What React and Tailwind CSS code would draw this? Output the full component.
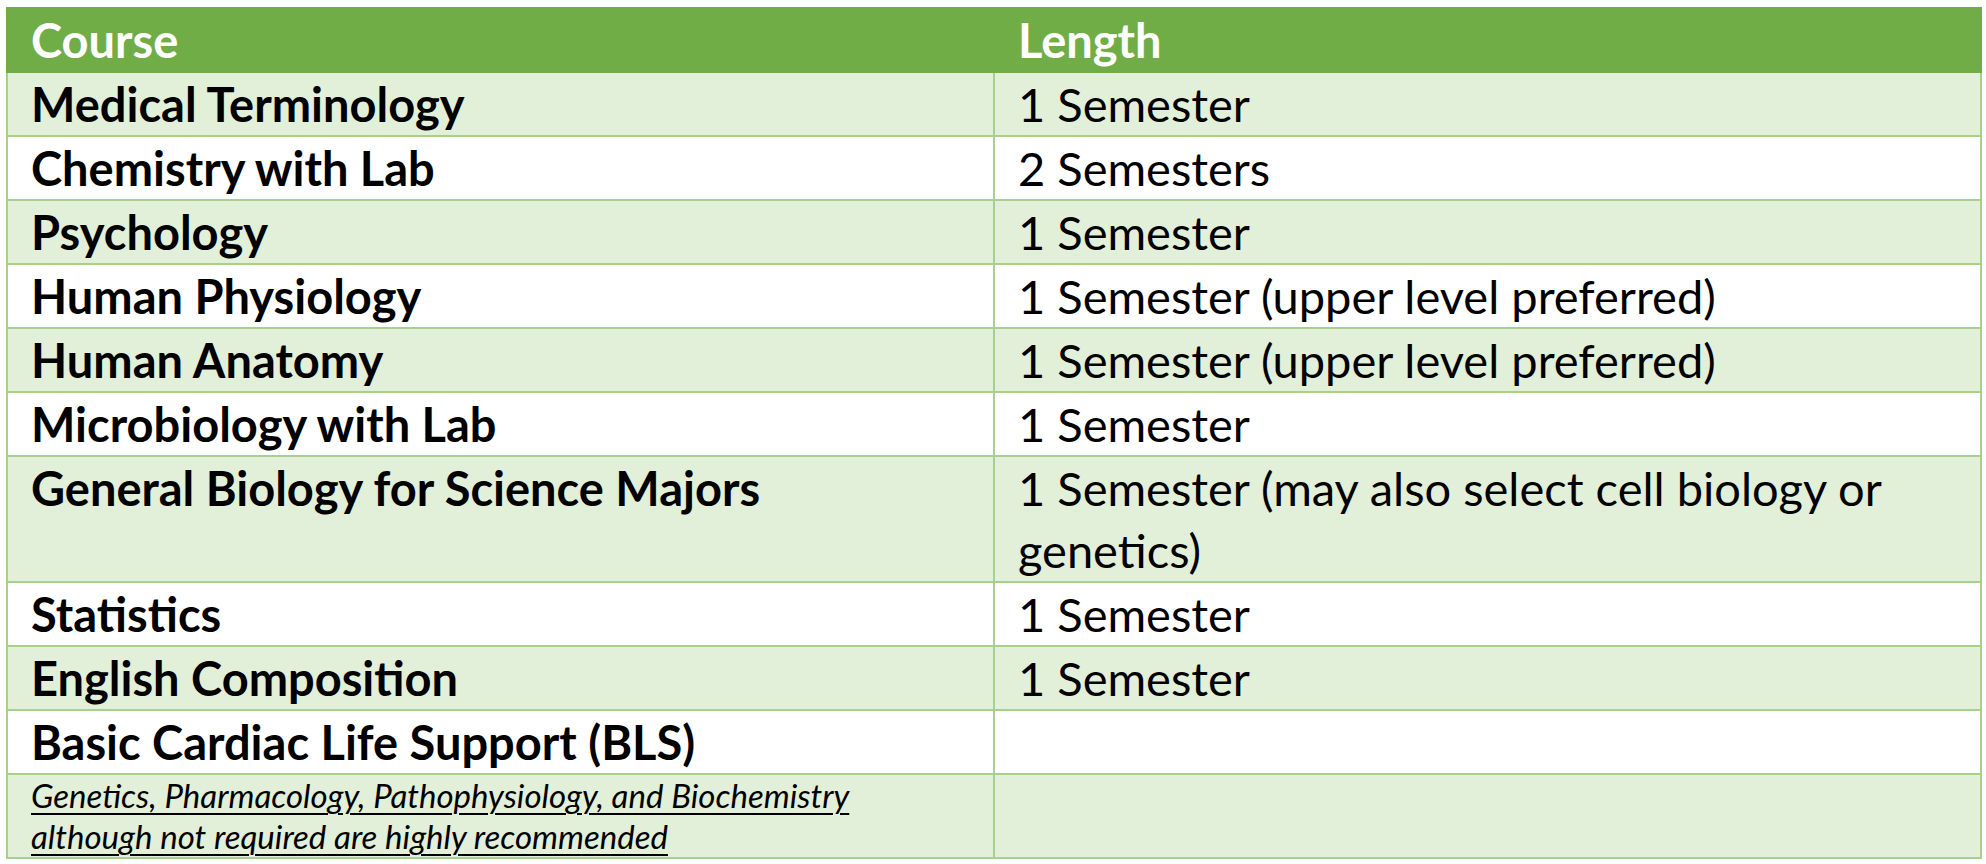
export default function App() {
  // Prerequisite courses, alternating band colours as in the source table
  const rows = [
    { course: 'Medical Terminology', length: '1 Semester' },
    { course: 'Chemistry with Lab', length: '2 Semesters' },
    { course: 'Psychology', length: '1 Semester' },
    { course: 'Human Physiology', length: '1 Semester (upper level preferred)' },
    { course: 'Human Anatomy', length: '1 Semester (upper level preferred)' },
    { course: 'Microbiology with Lab', length: '1 Semester' },
    { course: 'General Biology for Science Majors', length: '1 Semester (may also select cell biology or genetics)' },
    { course: 'Statistics', length: '1 Semester' },
    { course: 'English Composition', length: '1 Semester' },
    { course: 'Basic Cardiac Life Support (BLS)', length: '' },
  ];

  return (
    <div className="min-h-screen bg-white text-black" style={{ fontFamily: 'Lato, "Noto Sans", sans-serif' }}>
      <table className="table-fixed border-collapse ml-[6px] mt-[7px] w-[1974px]">
        <colgroup>
          <col className="w-[987px]" />
          <col className="w-[987px]" />
        </colgroup>
        <thead>
          <tr className="bg-[#70ad47] text-white">
            <th className="border-2 border-[#70ad47] px-[23px] text-left align-top font-bold text-[47px] leading-[62px]">
              Course
            </th>
            <th className="border-2 border-[#70ad47] px-[23px] text-left align-top font-bold text-[47px] leading-[62px]">
              Length
            </th>
          </tr>
        </thead>
        <tbody>
          {rows.map((row, i) => (
            <tr key={i} className={i % 2 === 0 ? 'bg-[#e2efd9]' : 'bg-white'}>
              <td className="border-2 border-[#a8d08d] px-[23px] align-top font-bold text-[47px] leading-[62px]">
                {row.course}
              </td>
              <td className="border-2 border-[#a8d08d] px-[23px] align-top text-[47px] leading-[62px]">
                {row.length}
              </td>
            </tr>
          ))}
          <tr className="bg-[#e2efd9]">
            <td className="border-2 border-[#a8d08d] px-[23px] align-top italic text-[33px] leading-[41px]">
              <span className="underline decoration-2 underline-offset-[5px]">
                Genetics, Pharmacology, Pathophysiology, and Biochemistry
                <br />
                although not required are highly recommended
              </span>
            </td>
            <td className="border-2 border-[#a8d08d] px-[23px]"></td>
          </tr>
        </tbody>
      </table>
    </div>
  );
}
